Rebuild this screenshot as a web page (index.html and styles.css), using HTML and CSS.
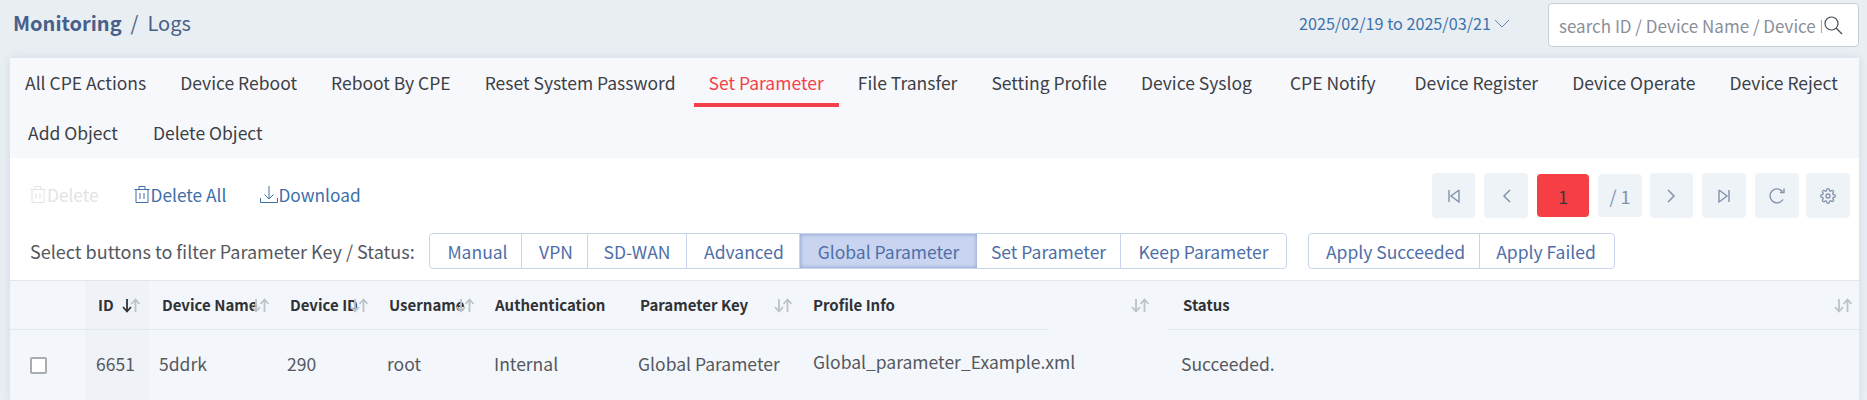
FILE: index.html
```html
<!DOCTYPE html>
<html lang="en">
<head>
<meta charset="utf-8">
<title>Monitoring / Logs</title>
<link rel="stylesheet" href="styles.css">
</head>
<body>
<svg class="defs" width="0" height="0" aria-hidden="true">
  <symbol id="arrows" viewBox="0 0 18 15">
    <path class="dn" d="M5 1v12M1 9l4 4.500L9 9" fill="none" stroke-width="1.800"/>
    <path class="up" d="M13.500 14V2M9.500 6l4-4.500 4 4.500" fill="none" stroke-width="1.800"/>
  </symbol>
</svg>
<header class="topbar">
  <h1 class="crumbs"><b>Monitoring</b><span class="sep">/</span><span>Logs</span></h1>
  <div class="top-right">
    <button class="date">2025/02/19 to 2025/03/21
      <svg width="16" height="9" viewBox="0 0 16 9" fill="none" stroke="#5a86b8" stroke-width="1"><path d="M1 1l7 7 7-7"/></svg>
    </button>
    <div class="search">
      <input class="search-input" placeholder="search ID / Device Name / Device ID / Username">
      <svg width="19" height="19" viewBox="0 0 19 19" fill="none" stroke="#444b55" stroke-width="1.200"><circle cx="7.500" cy="7.500" r="6.500"/><path d="M12 12l6 6"/></svg>
    </div>
  </div>
</header>
<main class="card">
  <nav class="tabs">
    <a class="tab">All CPE Actions</a><a class="tab">Device Reboot</a><a class="tab">Reboot By CPE</a><a class="tab tab-reset">Reset System Password</a><a class="tab active">Set Parameter</a><a class="tab">File Transfer</a><a class="tab">Setting Profile</a><a class="tab">Device Syslog</a><a class="tab tab-notify">CPE Notify</a><a class="tab">Device Register</a><a class="tab">Device Operate</a><a class="tab">Device Reject</a><a class="tab tab-first">Add Object</a><a class="tab">Delete Object</a>
  </nav>
  <section class="toolbar">
    <div class="actions">
      <a class="action disabled"><svg class="ic" width="16" height="19" viewBox="0 0 16 19" fill="none" stroke="currentColor"><path d="M.5 4.500h15M5 4.500V1.500h6v3M2 4.500v13h12v-13M6 8v6M10 8v6"/></svg>Delete</a>
      <a class="action"><svg class="ic" width="16" height="19" viewBox="0 0 16 19" fill="none" stroke="currentColor"><path d="M.5 4.500h15M5 4.500V1.500h6v3M2 4.500v13h12v-13M6 8v6M10 8v6"/></svg>Delete All</a>
      <a class="action action-dl"><svg class="ic" width="18" height="19" viewBox="0 0 18 19" fill="none" stroke="currentColor"><path d="M9 1v13M4.500 9.500L9 14l4.500-4.500M.5 13v4.500h17V13"/></svg>Download</a>
    </div>
    <div class="pager">
      <button class="pg"><svg width="14" height="14" viewBox="0 0 14 14" fill="none" stroke="#8492ab" stroke-width="1.400"><path d="M2 1v12M12 1v12L4 7l8-6"/></svg></button>
      <button class="pg pg-w"><svg width="9" height="14" viewBox="0 0 9 14" fill="none" stroke="#8492ab" stroke-width="1.500"><path d="M8 1L2 7l6 6"/></svg></button>
      <button class="pg pg-now">1</button>
      <button class="pg pg-w pg-total">/ 1</button>
      <button class="pg pg-next"><svg width="9" height="14" viewBox="0 0 9 14" fill="none" stroke="#8492ab" stroke-width="1.500"><path d="M1 1l6 6-6 6"/></svg></button>
      <button class="pg pg-w"><svg width="14" height="14" viewBox="0 0 14 14" fill="none" stroke="#8492ab" stroke-width="1.400"><path d="M12 1v12M2 1v12l8-6-8-6"/></svg></button>
      <button class="pg pg-w"><svg width="17" height="16" viewBox="0 0 17 16" fill="none" stroke="#8492ab" stroke-width="1.400"><path d="M14 11.500A7 7 0 1 1 13.500 3.500M15 .5v4h-4"/></svg></button>
      <button class="pg pg-w pg-last"><svg width="16" height="16" viewBox="0 0 24 24" fill="none" stroke="#8492ab" stroke-width="2"><circle cx="12" cy="12" r="3"/><path d="M19.400 15a1.650 1.650 0 0 0 .33 1.820l.06.06a2 2 0 1 1-2.830 2.830l-.06-.06a1.650 1.650 0 0 0-2.800 1.170V21a2 2 0 0 1-4 0v-.09A1.650 1.650 0 0 0 9 19.400a1.650 1.650 0 0 0-1.820.33l-.06.06a2 2 0 1 1-2.830-2.830l.06-.06a1.650 1.650 0 0 0-1.170-2.800H3a2 2 0 0 1 0-4h.09A1.650 1.650 0 0 0 4.600 9a1.650 1.650 0 0 0-.33-1.820l-.06-.06a2 2 0 1 1 2.830-2.830l.06.06A1.650 1.650 0 0 0 9.900 3.090V3a2 2 0 0 1 4 0v.09a1.650 1.650 0 0 0 2.800 1.170l.06-.06a2 2 0 1 1 2.830 2.830l-.06.06a1.650 1.650 0 0 0 1.170 2.800H21a2 2 0 0 1 0 4h-.09a1.650 1.650 0 0 0-1.510 1z"/></svg></button>
    </div>
  </section>
  <section class="filters">
    <span class="filter-label">Select buttons to filter Parameter Key / Status:</span>
    <div class="group group-keys">
      <button class="fb fb-manual">Manual</button><button class="fb fb-vpn">VPN</button><button class="fb fb-sdwan">SD-WAN</button><button class="fb fb-adv">Advanced</button><button class="fb fb-global on">Global Parameter</button><button class="fb fb-set">Set Parameter</button><button class="fb fb-keep">Keep Parameter</button>
    </div>
    <div class="group group-status">
      <button class="fb fb-ok">Apply Succeeded</button><button class="fb fb-fail">Apply Failed</button>
    </div>
  </section>
  <section class="table">
    <div class="th"></div>
    <div class="th th-id col-sorted">ID<svg class="sort sort-id"><use href="#arrows"/></svg></div>
    <div class="th h-name">Device Name<svg class="sort s-name"><use href="#arrows"/></svg></div>
    <div class="th h-dev">Device ID<svg class="sort s-dev"><use href="#arrows"/></svg></div>
    <div class="th h-user">Username<svg class="sort s-user"><use href="#arrows"/></svg></div>
    <div class="th h-auth">Authentication</div>
    <div class="th h-key">Parameter Key<svg class="sort s-key"><use href="#arrows"/></svg></div>
    <div class="th h-prof">Profile Info<svg class="sort s-prof"><use href="#arrows"/></svg></div>
    <div class="th h-status">Status<svg class="sort s-status"><use href="#arrows"/></svg></div>
    <div class="td td-check"><span class="checkbox"></span></div>
    <div class="td td-id col-sorted">6651</div>
    <div class="td td-name">5ddrk</div>
    <div class="td">290</div>
    <div class="td">root</div>
    <div class="td">Internal</div>
    <div class="td">Global Parameter</div>
    <div class="td td-prof">Global_parameter_Example.xml</div>
    <div class="td td-status">Succeeded.</div>
  </section>
</main>
</body>
</html>
```
FILE: styles.css
```css
* { box-sizing: border-box; }
html, body { margin: 0; height: 400px; overflow: hidden; }
body {
  background: #e9eef3;
  font-family: "Noto Sans CJK TC", "Noto Sans", sans-serif;
  font-size: 17.500px;
  color: #3c4046;
}
button { font: inherit; border: 0; background: none; padding: 0; }
.defs { position: absolute; }

.topbar {
  height: 58px;
  display: flex;
  justify-content: space-between;
  padding: 3px 8px 0 13px;
}
.crumbs {
  margin: 0;
  font-size: 20px;
  font-weight: 400;
  color: #47608a;
  line-height: 40px;
  display: flex;
}
.crumbs b { font-weight: 700; }
.sep { margin: 0 9px; }
.top-right { display: flex; align-items: flex-start; }
.date {
  color: #3d73ad;
  height: 40px;
  display: flex;
  align-items: center;
  gap: 3px;
  margin-right: 38px;
  font-size: 16.200px;
}
.search {
  width: 311px;
  height: 44px;
  background: #fff;
  border: 1px solid #c9ced6;
  border-radius: 4px;
  display: flex;
  align-items: center;
  padding-left: 10px;
  gap: 2px;
}
.search-input {
  width: 263px;
  border: 0;
  outline: 0;
  padding: 0;
  font: inherit;
  font-size: 17px;
  background: transparent;
  color: #333;
}
.search-input::placeholder { color: #8a8f9a; opacity: 1; }

.card {
  margin: 0 8px 0 10px;
  background: #fff;
  box-shadow: 0 0 8px rgba(70, 100, 140, .14);
}
.tabs {
  height: 100px;
  background: #f7f8fb;
  display: flex;
  flex-wrap: wrap;
  gap: 0 4px;
  align-content: flex-start;
}
.tab {
  position: relative;
  height: 50px;
  line-height: 50px;
  padding: 0 15px;
  white-space: nowrap;
}
.tab-first { padding-left: 18px; padding-right: 16px; }
.tab-reset { margin-right: -1px; }
.tab-notify { margin: 0 5px 0 4px; }
.tab.active { color: #f5414a; }
.tab.active::after {
  content: "";
  position: absolute;
  left: 0; right: 0; bottom: 1px;
  height: 4px;
  background: #f5414a;
}

.toolbar {
  height: 75px;
  display: flex;
  justify-content: space-between;
  align-items: flex-start;
  padding: 15px 9px 0 20px;
}
.actions { display: flex; gap: 35px; height: 43px; align-items: center; font-size: 17.300px; }
.action { display: flex; align-items: center; color: #3d6fa8; white-space: nowrap; }
.action .ic { margin-right: 1px; }
.action.disabled { color: #e2e3e4; }
.action-dl { margin-left: -1px; }
.action-dl .ic { margin-right: 0; }

.pager { display: flex; gap: 9px; }
.pg {
  width: 43px;
  height: 45px;
  background: #edf3f7;
  border-radius: 4px;
  color: #8492ab;
  display: flex;
  align-items: center;
  justify-content: center;
}
.pg-w { width: 44px; }
.pg-now {
  width: 52px;
  height: 43px;
  margin-top: 1px;
  background: #f53f45;
  color: #3a3a3c;
  font-size: 18px;
}
.pg-total { height: 43px; margin-top: 1px; font-size: 18px; }
.pg-next { margin-left: -1px; }
.pg-last { margin-left: -2px; }

.filters {
  height: 47px;
  display: flex;
  padding: 0 0 11px 20px;
  align-items: stretch;
}
.filter-label { line-height: 36px; width: 399px; font-size: 18px; color: #55585e; white-space: nowrap; }
.group {
  display: flex;
  border: 1px solid #c9d5ee;
  border-radius: 4px;
  overflow: hidden;
}
.group-status { margin-left: 21px; }
.fb {
  color: #4f6ea8;
  border-right: 1px solid #c9d5ee;
  white-space: nowrap;
}
.fb:last-child { border-right: 0; }
.fb.on {
  background: #c9d5f0;
  box-shadow: inset 0 0 4px rgba(70, 100, 170, .55);
  border-right: 0;
}
.fb-manual { width: 92px; padding-left: 4px; }
.fb-vpn { width: 66px; padding-left: 3px; }
.fb-sdwan { width: 99px; }
.fb-adv { width: 113px; padding-left: 2px; }
.fb-global { width: 177px; }
.fb-set { width: 144px; }
.fb-keep { width: 165px; }
.fb-ok { width: 171px; padding-left: 3px; }
.fb-fail { width: 134px; padding-right: 2px; }

.table {
  display: grid;
  grid-template-columns: 75px 64px 129px 100px 107px 144px 176px 362px 1fr;
  grid-template-rows: 49px 71px;
  background: #f3f6fa;
  border-top: 1px solid #e2e6ea;
}
.th {
  position: relative;
  border-bottom: 1px solid #e2e7ec;
  font-weight: 700;
  font-size: 15px;
  color: #2f3236;
  line-height: 48px;
  white-space: nowrap;
  padding-left: 11px;
}
.th-id { padding-left: 13px; }
.h-name { padding-left: 13px; }
.h-dev { padding-left: 12px; }
.h-auth { padding-left: 10px; }
.h-prof { padding-left: 8px; border-bottom: 0; }
.h-prof::after {
  content: "";
  position: absolute;
  left: 0; bottom: 0;
  width: 242px;
  height: 1px;
  background: #e2e7ec;
}
.h-status { padding-left: 16px; }
.col-sorted { background: #eff2f7; }
.sort {
  position: absolute;
  top: 17px;
  width: 18px;
  height: 15px;
}
.dn { stroke: var(--arrow-down, #bcc2c8); }
.up { stroke: #bcc2c8; }
.sort-id { left: 37px; --arrow-down: #2f3236; }
.s-name { right: 9px; }
.s-dev { right: 10px; }
.s-user { right: 11px; }
.s-key { right: 13px; }
.s-prof { right: 18px; }
.s-status { right: 7px; }

.td {
  padding-left: 9px;
  line-height: 67px;
  color: #55585e;
  white-space: nowrap;
}
.td-name { padding-left: 10px; }
.td-id { padding-left: 11px; }
.td-prof { line-height: 64px; padding-left: 8px; }
.td-status { padding-left: 14px; }
.td-check { display: flex; align-items: center; padding-left: 20px; }
.checkbox {
  width: 17px;
  height: 17px;
  border: 2px solid #a9adb3;
  border-radius: 2px;
  background: #fff;
}
```
